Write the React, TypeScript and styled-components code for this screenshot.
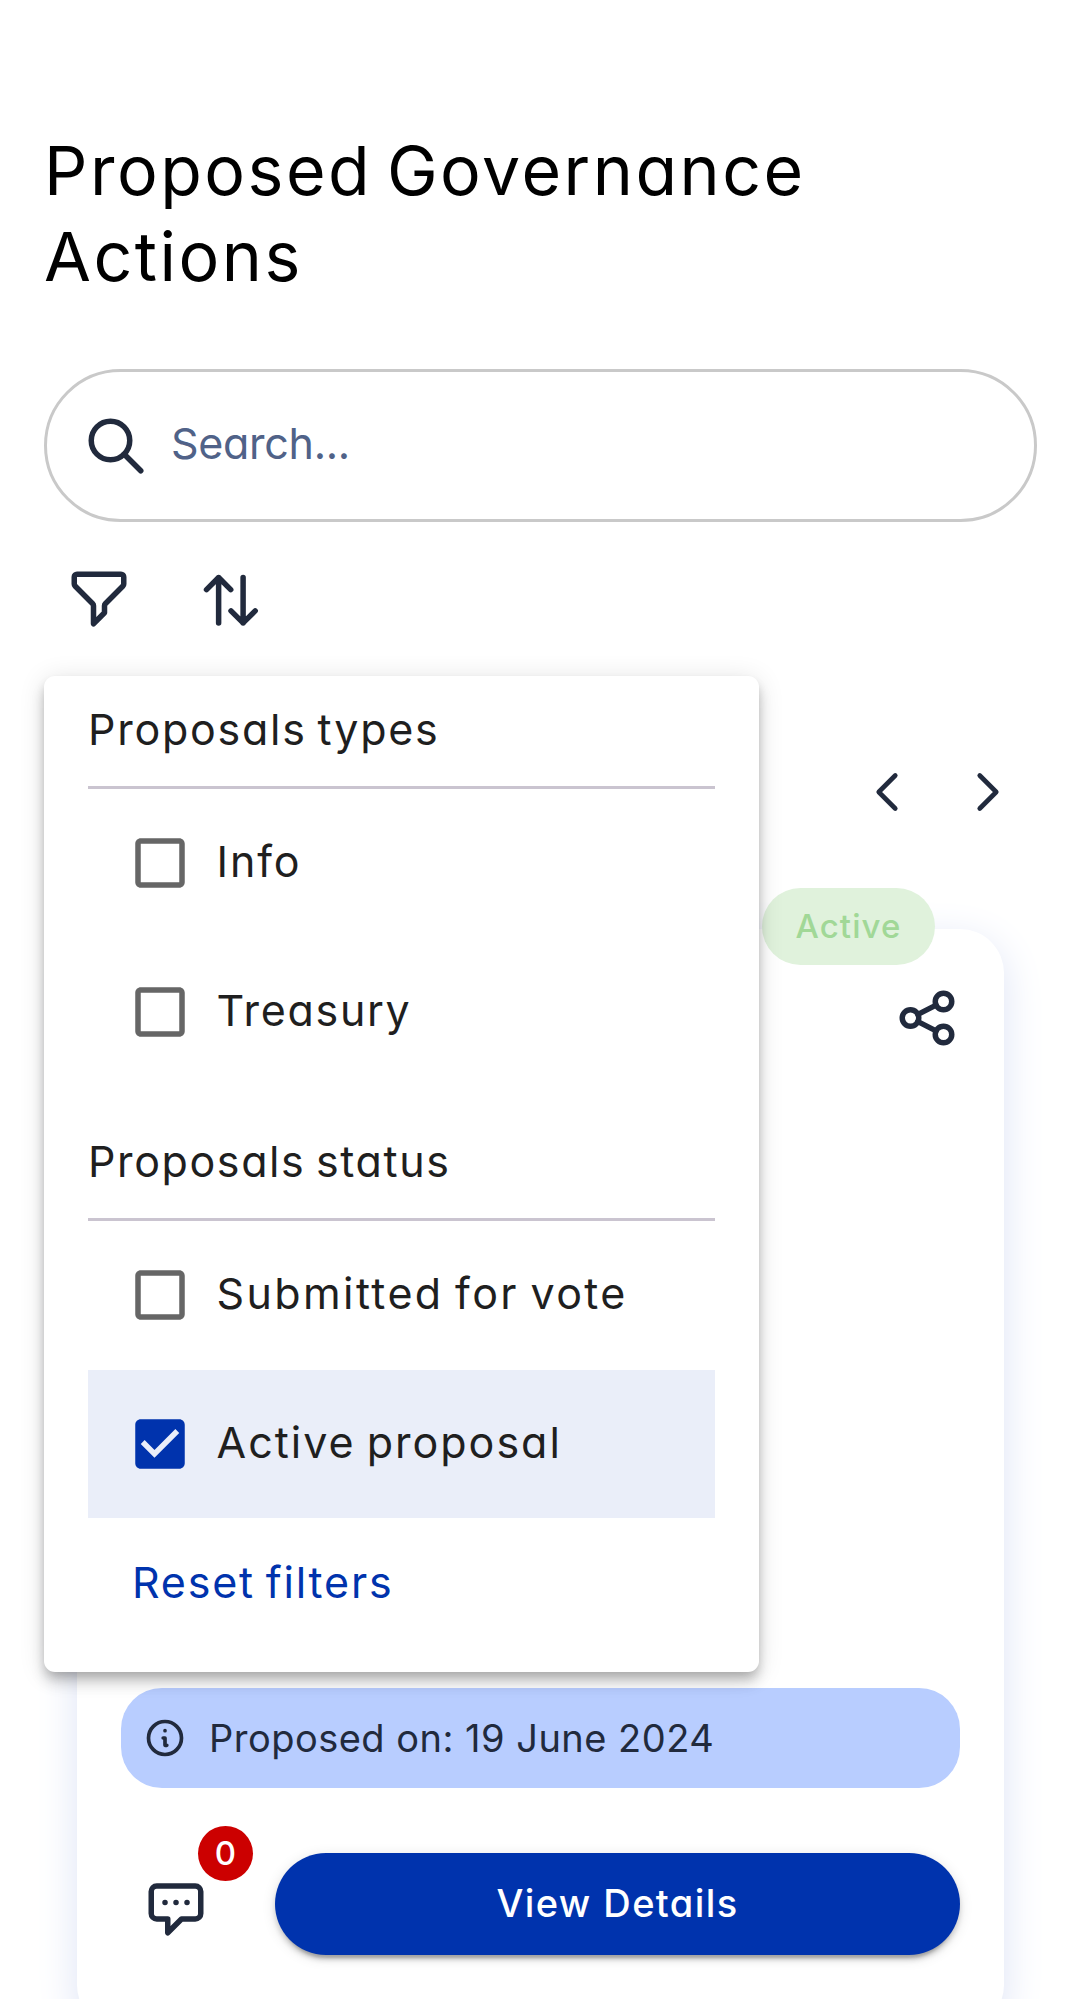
import React from 'react';
import styled, { createGlobalStyle } from 'styled-components';

const GlobalStyle = createGlobalStyle`
  * { box-sizing: border-box; }
  html, body { margin: 0; padding: 0; background: #fff; }
  body {
    height: 1999px;
    overflow: hidden;
    font-family: Inter, Roboto, "Liberation Sans", sans-serif;
    font-feature-settings: "cv11" 1;
    color: #212a3d;
  }
`;

const Page = styled.main`
  position: relative;
  width: 1081px;
  height: 1999px;
  overflow: hidden;
  padding: 127px 44px 0;
`;

const Title = styled.h1`
  margin: 0;
  height: 242px;
  font-size: 68px;
  font-weight: 400;
  line-height: 86px;
  letter-spacing: 2.5px;
  word-spacing: -7px;
  color: #000;
`;

const SearchBox = styled.label`
  display: flex;
  align-items: center;
  width: 993px;
  height: 153px;
  padding-left: 36px;
  gap: 22px;
  border: 3px solid #c9c9c9;
  border-radius: 77px;
`;

const Placeholder = styled.span`
  padding-bottom: 5px;
  font-size: 43px;
  line-height: 60px;
  letter-spacing: -0.3px;
  color: #506288;
`;

const Toolbar = styled.div`
  display: flex;
  gap: 66px;
  padding: 44px 22px 0;
`;

const Icon = styled.svg`
  display: block;
  flex: none;
  width: 66px;
  height: 66px;
  fill: none;
  stroke: #212a3d;
  stroke-width: 2;
  stroke-linecap: round;
  stroke-linejoin: round;
`;

const PagerIcon = styled(Icon)`
  stroke-width: 1.7;
`;

const Pager = styled.nav`
  display: flex;
  justify-content: flex-end;
  gap: 35px;
  margin: 127px 16px 0 0;
`;

const Card = styled.article`
  position: relative;
  display: flex;
  flex-direction: column;
  justify-content: space-between;
  width: 927px;
  height: 1100px;
  margin: 104px 0 0 33px;
  padding: 56px 44px 74px;
  border-radius: 44px;
  background: #fff;
  box-shadow: 0 11px 41px 0 #dde3f5;
`;

const StatusPill = styled.span`
  position: absolute;
  top: -41px;
  right: 69px;
  display: flex;
  align-items: center;
  justify-content: center;
  width: 173px;
  height: 77px;
  padding-bottom: 2px;
  border-radius: 39px;
  background: #e0f2dc;
  color: #a1d897;
  font-size: 33px;
  font-weight: 500;
  letter-spacing: 1.1px;
`;

const CardHeader = styled.header`
  display: flex;
  justify-content: flex-end;
`;

const CardFooter = styled.footer`
  display: flex;
  flex-direction: column;
  gap: 65px;
`;

const DateBar = styled.div`
  display: flex;
  align-items: center;
  height: 100px;
  padding-left: 22px;
  gap: 22px;
  border-radius: 41px;
  background: #b8cdff;
  font-size: 38px;
  letter-spacing: 0.48px;
`;

const InfoIcon = styled(Icon)`
  width: 44px;
  height: 44px;
`;

const CardActions = styled.div`
  display: flex;
  justify-content: space-between;
  height: 102px;
`;

const Comments = styled.div`
  position: relative;
  padding: 22px;
`;

const CountBadge = styled.span`
  position: absolute;
  top: -27px;
  left: 77px;
  width: 55px;
  height: 55px;
  border-radius: 50%;
  background: #c00;
  color: #fff;
  font-size: 33px;
  font-weight: 500;
  line-height: 55px;
  text-align: center;
`;

const DetailsButton = styled.button`
  width: 685px;
  height: 102px;
  padding: 0 0 2px;
  border: 0;
  border-radius: 51px;
  background: #0033ad;
  color: #fff;
  font: inherit;
  font-size: 38px;
  font-weight: 500;
  letter-spacing: 1.4px;
  box-shadow: 0 8px 3px -5px rgba(0, 0, 0, 0.2), 0 5px 5px 0 rgba(0, 0, 0, 0.14),
    0 3px 14px 0 rgba(0, 0, 0, 0.12);
`;

const FilterMenu = styled.section`
  position: absolute;
  top: 676px;
  left: 44px;
  width: 715px;
  height: 996px;
  padding: 0 44px;
  border-radius: 11px;
  background: #fff;
  color: #1f1f1f;
  font-size: 43px;
  word-spacing: -3px;
  box-shadow: 0 5.5px 11px -3px rgba(0, 0, 0, 0.2), 0 11px 14px 0 rgba(0, 0, 0, 0.14),
    0 3px 27px 0 rgba(0, 0, 0, 0.12);
`;

const GroupTitle = styled.h2<{ $height: number; $spacing: string }>`
  display: flex;
  align-items: flex-end;
  height: ${(p) => p.$height}px;
  margin: 0;
  padding-bottom: 27px;
  border-bottom: 3px solid #cac4d0;
  font-size: inherit;
  font-weight: 400;
  line-height: 60px;
  letter-spacing: ${(p) => p.$spacing};
`;

const Option = styled.div<{ $checked?: boolean; $spacing: string }>`
  display: flex;
  align-items: center;
  height: 148.5px;
  padding-left: 38.5px;
  gap: 24px;
  background: ${(p) => (p.$checked ? '#eaeef9' : 'transparent')};
  letter-spacing: ${(p) => p.$spacing};
`;

const OptionLabel = styled.span`
  padding-bottom: 4px;
`;

const CheckIcon = styled.svg<{ $checked?: boolean }>`
  width: 66px;
  height: 66px;
  fill: ${(p) => (p.$checked ? '#0033ad' : '#666')};
`;

const ResetLink = styled.a`
  display: block;
  padding: 34px 0 0 44px;
  line-height: 60px;
  letter-spacing: 1.8px;
  color: #0033ad;
`;

const UNCHECKED =
  'M19 5v14H5V5h14m0-2H5c-1.1 0-2 .9-2 2v14c0 1.1.9 2 2 2h14c1.1 0 2-.9 2-2V5c0-1.1-.9-2-2-2z';
const CHECKED =
  'M19 3H5c-1.11 0-2 .9-2 2v14c0 1.1.89 2 2 2h14c1.11 0 2-.9 2-2V5c0-1.1-.89-2-2-2zm-9 14l-5-5 1.41-1.41L10 14.17l7.59-7.59L19 8l-9 9z';

type FilterOptionProps = { label: string; checked?: boolean; spacing: string };

const FilterOption = ({ label, checked, spacing }: FilterOptionProps) => (
  <Option $checked={checked} $spacing={spacing}>
    <CheckIcon viewBox="0 0 24 24" $checked={checked}>
      <path d={checked ? CHECKED : UNCHECKED} />
    </CheckIcon>
    <OptionLabel>{label}</OptionLabel>
  </Option>
);

export default function App() {
  return (
    <Page>
      <GlobalStyle />
      <Title>
        Proposed Governance
        <br />
        Actions
      </Title>
      <SearchBox>
        <Icon viewBox="0 0 24 24">
          <circle cx="10" cy="10" r="7" />
          <path d="m15 15 6 6" />
        </Icon>
        <Placeholder>Search...</Placeholder>
      </SearchBox>
      <Toolbar>
        <Icon viewBox="0 0 24 24">
          <path d="M3 4a1 1 0 0 1 1-1h16a1 1 0 0 1 1 1v2.586a1 1 0 0 1-.293.707l-6.414 6.414a1 1 0 0 0-.293.707V17l-4 4v-6.586a1 1 0 0 0-.293-.707L3.293 7.293A1 1 0 0 1 3 6.586V4z" />
        </Icon>
        <Icon viewBox="0 0 24 24">
          <path d="M7.5 20.7V4.2M3.1 8.6 7.5 4.2l4.4 4.4M16.4 4.2v16.5M12 16.3l4.4 4.4 4.4-4.4" />
        </Icon>
      </Toolbar>
      <Pager>
        <PagerIcon viewBox="0 0 24 24">
          <path d="m15 6-6 6 6 6" />
        </PagerIcon>
        <PagerIcon viewBox="0 0 24 24">
          <path d="m9 6 6 6-6 6" />
        </PagerIcon>
      </Pager>
      <Card>
        <StatusPill>Active</StatusPill>
        <CardHeader>
          <Icon viewBox="0 0 24 24">
            <circle cx="6" cy="12" r="3" />
            <circle cx="18" cy="6" r="3" />
            <circle cx="18" cy="18" r="3" />
            <path d="m8.7 10.7 6.6-3.4M8.7 13.3l6.6 3.4" />
          </Icon>
        </CardHeader>
        <CardFooter>
          <DateBar>
            <InfoIcon viewBox="0 0 24 24">
              <circle cx="12" cy="12" r="9" />
              <path d="M12 8h.01M11 12h1v4h1" />
            </InfoIcon>
            <span>Proposed on: 19 June 2024</span>
          </DateBar>
          <CardActions>
            <Comments>
              <Icon viewBox="0 0 24 24">
                <path d="M8 10h.01M12 10h.01M16 10h.01M9 16H5a2 2 0 0 1-2-2V6a2 2 0 0 1 2-2h14a2 2 0 0 1 2 2v8a2 2 0 0 1-2 2h-5l-5 5v-5z" />
              </Icon>
              <CountBadge>0</CountBadge>
            </Comments>
            <DetailsButton>View Details</DetailsButton>
          </CardActions>
        </CardFooter>
      </Card>
      <FilterMenu>
        <GroupTitle $height={113} $spacing="1.75px">
          Proposals types
        </GroupTitle>
        <FilterOption label="Info" spacing="1.9px" />
        <FilterOption label="Treasury" spacing="1.7px" />
        <GroupTitle $height={135} $spacing="1.6px">
          Proposals status
        </GroupTitle>
        <FilterOption label="Submitted for vote" spacing="2.4px" />
        <FilterOption label="Active proposal" spacing="2px" checked />
        <ResetLink>Reset filters</ResetLink>
      </FilterMenu>
    </Page>
  );
}
